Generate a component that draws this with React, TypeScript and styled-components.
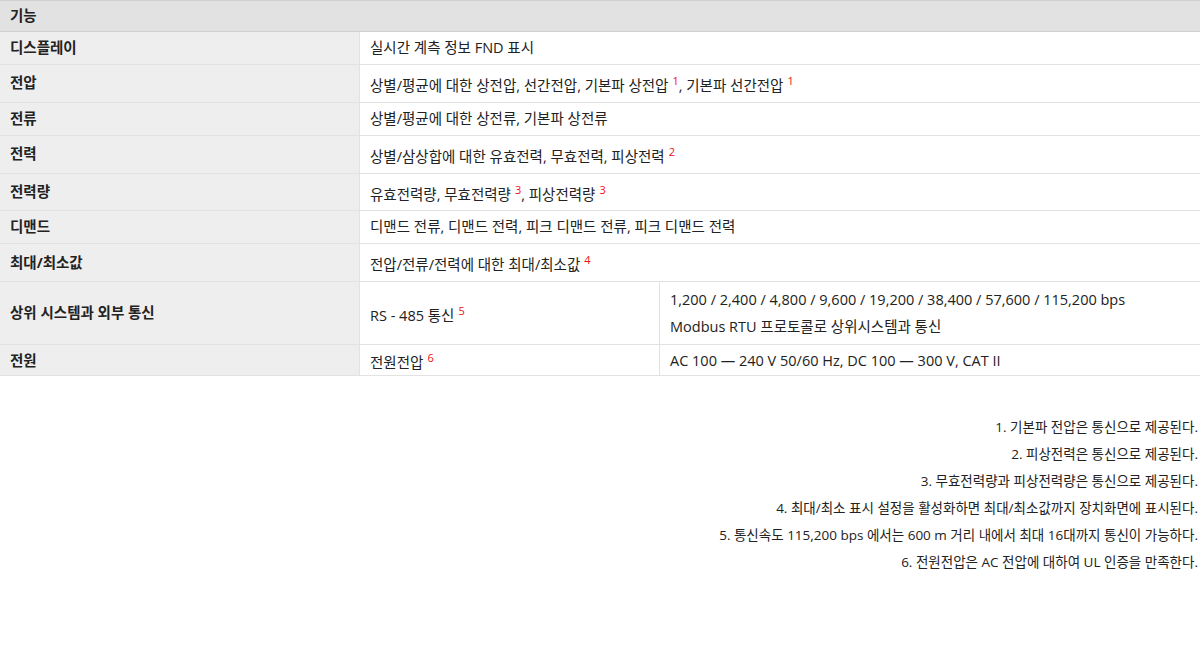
import React from 'react';
import styled, { createGlobalStyle } from 'styled-components';

const GlobalStyle = createGlobalStyle`
  body {
    margin: 0;
    background: #fff;
    font-family: "Open Sans", "Noto Sans CJK KR", sans-serif;
    color: #222;
  }
`;

const Table = styled.table`
  width: 100%;
  border-collapse: collapse;
  font-size: 14.5px;
  border-top: 1px solid #cfcfcf;
`;

const HeadCell = styled.th`
  background: #e2e2e2;
  text-align: left;
  font-weight: 700;
  padding: 5px 10px;
  line-height: 20px;
  border-bottom: 1px solid #cfcfcf;
`;

const Label = styled.th<{ $tight?: boolean }>`
  width: 339px;
  background: #eeeeee;
  text-align: left;
  font-weight: 700;
  padding: ${(p) => (p.$tight ? '3px 10px 2px' : '6px 10px')};
  line-height: 20px;
  border-bottom: 1px solid #e2e2e2;
`;

const Cell = styled.td<{ $wide?: boolean; $tight?: boolean }>`
  padding: ${(p) => (p.$tight ? '3px 10px 2px' : '6px 10px')};
  line-height: 20px;
  border-bottom: 1px solid #e2e2e2;
  border-left: 1px solid #e2e2e2;
  width: ${(p) => (p.$wide ? 'auto' : '279px')};
`;

const Lines = styled.div`
  line-height: 27px;
  margin: -2px 0;
`;

const Note = styled.sup`
  color: #f00f14;
  font-size: 11px;
  margin-left: 4px;
`;

const Footnotes = styled.ol`
  list-style: none;
  margin: 38px 2px 0 0;
  padding: 0;
  text-align: right;
  font-size: 13.5px;
  line-height: 27px;
`;

interface IRow {
    label: string;
    value: React.ReactNode;
}

const rows: IRow[] = [
    { label: '디스플레이', value: '실시간 계측 정보 FND 표시' },
    {
        label: '전압',
        value: (
            <>
                상별/평균에 대한 상전압, 선간전압, 기본파 상전압<Note>1</Note>, 기본파 선간전압<Note>1</Note>
            </>
        ),
    },
    { label: '전류', value: '상별/평균에 대한 상전류, 기본파 상전류' },
    {
        label: '전력',
        value: (
            <>
                상별/삼상합에 대한 유효전력, 무효전력, 피상전력<Note>2</Note>
            </>
        ),
    },
    {
        label: '전력량',
        value: (
            <>
                유효전력량, 무효전력량<Note>3</Note>, 피상전력량<Note>3</Note>
            </>
        ),
    },
    { label: '디맨드', value: '디맨드 전류, 디맨드 전력, 피크 디맨드 전류, 피크 디맨드 전력' },
    {
        label: '최대/최소값',
        value: (
            <>
                전압/전류/전력에 대한 최대/최소값<Note>4</Note>
            </>
        ),
    },
];

const notes = [
    '1. 기본파 전압은 통신으로 제공된다.',
    '2. 피상전력은 통신으로 제공된다.',
    '3. 무효전력량과 피상전력량은 통신으로 제공된다.',
    '4. 최대/최소 표시 설정을 활성화하면 최대/최소값까지 장치화면에 표시된다.',
    '5. 통신속도 115,200 bps 에서는 600 m 거리 내에서 최대 16대까지 통신이 가능하다.',
    '6. 전원전압은 AC 전압에 대하여 UL 인증을 만족한다.',
];

const App = () => (
    <>
        <GlobalStyle />
        <Table>
            <thead>
                <tr>
                    <HeadCell colSpan={3}>기능</HeadCell>
                </tr>
            </thead>
            <tbody>
                {rows.map((row) => (
                    <tr key={row.label}>
                        <Label>{row.label}</Label>
                        <Cell colSpan={2} $wide>{row.value}</Cell>
                    </tr>
                ))}
                <tr>
                    <Label>상위 시스템과 외부 통신</Label>
                    <Cell>
                        RS - 485 통신<Note>5</Note>
                    </Cell>
                    <Cell $wide>
                        <Lines>
                            <div>1,200 / 2,400 / 4,800 / 9,600 / 19,200 / 38,400 / 57,600 / 115,200 bps</div>
                            <div>Modbus RTU 프로토콜로 상위시스템과 통신</div>
                        </Lines>
                    </Cell>
                </tr>
                <tr>
                    <Label $tight>전원</Label>
                    <Cell $tight>
                        전원전압<Note>6</Note>
                    </Cell>
                    <Cell $wide $tight>AC 100 — 240 V 50/60 Hz, DC 100 — 300 V, CAT II</Cell>
                </tr>
            </tbody>
        </Table>
        <Footnotes>
            {notes.map((n) => (
                <li key={n}>{n}</li>
            ))}
        </Footnotes>
    </>
);

export default App;
